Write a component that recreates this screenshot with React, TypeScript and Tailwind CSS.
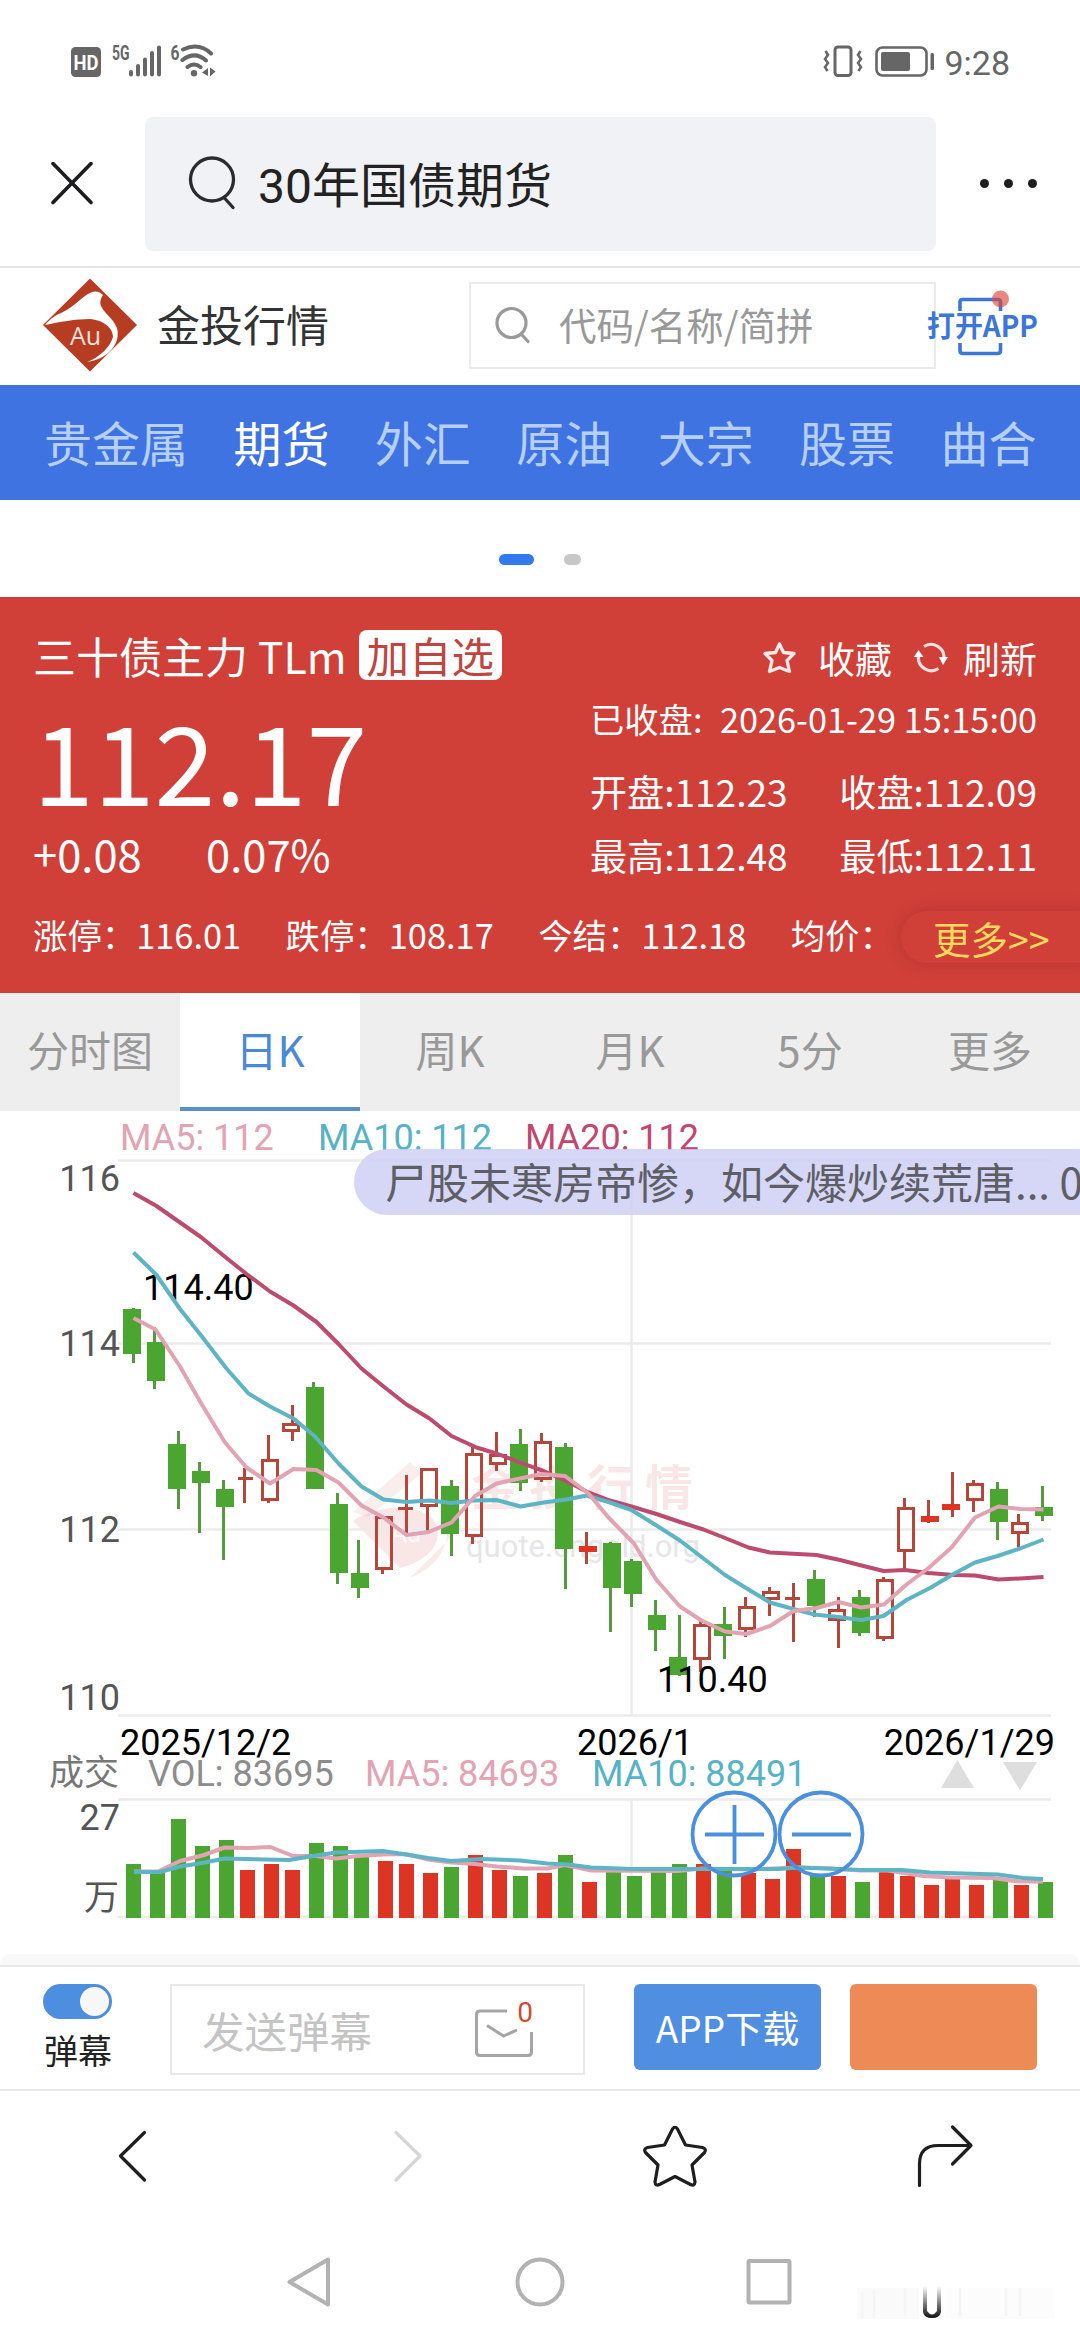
import React from 'react';

type Kind = 'g' | 'h' | 'r' | 'x';

// wick x, wick top, wick bottom, body left, body top, body bottom, kind
// g: falling, h: rising (hollow), r: rising (flat body), x: doji
const CANDLES: [number, number, number, number, number, number, Kind][] = [
    [133.5, 1308, 1363, 123, 1309, 1354, 'g'],
    [154.5, 1327, 1389, 147, 1342, 1381, 'g'],
    [178.5, 1431, 1509, 168, 1444, 1489, 'g'],
    [199.5, 1462, 1533, 192, 1471, 1483, 'g'],
    [223.5, 1480, 1560, 216, 1489, 1507, 'g'],
    [244.5, 1468, 1503, 238, 1477, 1480, 'x'],
    [268.5, 1435, 1503, 261, 1459, 1501, 'h'],
    [292.5, 1405, 1441, 282, 1423, 1432, 'h'],
    [313.5, 1382, 1489, 306, 1387, 1489, 'g'],
    [337.5, 1493, 1584, 330, 1504, 1573, 'g'],
    [358.5, 1540, 1598, 351, 1573, 1588, 'g'],
    [382.5, 1516, 1574, 375, 1516, 1570, 'h'],
    [406.5, 1475, 1533, 398, 1507, 1510, 'x'],
    [427.5, 1468, 1531, 420, 1468, 1507, 'h'],
    [451.5, 1480, 1556, 441, 1486, 1534, 'g'],
    [472.5, 1447, 1544, 465, 1453, 1537, 'h'],
    [496.5, 1432, 1471, 489, 1454, 1465, 'h'],
    [520.5, 1429, 1491, 510, 1444, 1483, 'g'],
    [541.5, 1433, 1482, 534, 1441, 1480, 'h'],
    [565.5, 1443, 1589, 555, 1447, 1549, 'g'],
    [586.5, 1532, 1564, 579, 1546, 1552, 'r'],
    [610.5, 1542, 1632, 603, 1543, 1588, 'g'],
    [631.5, 1559, 1607, 624, 1561, 1594, 'g'],
    [655.5, 1600, 1651, 648, 1615, 1630, 'g'],
    [679.5, 1615, 1676, 669, 1657, 1675, 'g'],
    [700.5, 1621, 1672, 693, 1624, 1660, 'h'],
    [724.5, 1607, 1659, 714, 1624, 1636, 'g'],
    [745.5, 1597, 1637, 738, 1606, 1630, 'h'],
    [769.5, 1587, 1616, 762, 1591, 1600, 'h'],
    [793.5, 1583, 1642, 785, 1597, 1600, 'x'],
    [814.5, 1570, 1617, 807, 1579, 1606, 'g'],
    [838.5, 1597, 1648, 828, 1609, 1621, 'h'],
    [859.5, 1590, 1636, 852, 1597, 1633, 'g'],
    [883.5, 1577, 1641, 876, 1579, 1639, 'h'],
    [904.5, 1498, 1568, 897, 1507, 1552, 'h'],
    [928.5, 1500, 1523, 921, 1516, 1522, 'r'],
    [952.5, 1472, 1517, 942, 1504, 1510, 'r'],
    [973.5, 1480, 1512, 966, 1483, 1501, 'h'],
    [997.5, 1482, 1540, 990, 1489, 1522, 'g'],
    [1018.5, 1514, 1547, 1011, 1522, 1534, 'h'],
    [1042.5, 1486, 1521, 1035, 1507, 1516, 'g'],
];

const MA20 = '133.5,1193 156.5,1206 201.5,1237.5 226.5,1258 246.5,1274 270,1291.5 293.5,1305.5 316.5,1322 338.5,1344 361.5,1368.5 383.5,1386.5 406.5,1404.5 429.5,1418.5 451.5,1436 476.5,1447.5 496.5,1453.5 520,1462.5 543.5,1471 566.5,1481 586.5,1491.5 610,1500.5 631.5,1506.5 656.5,1514 680,1522 703.5,1529.5 725,1538 748.5,1547.5 770,1552.5 816.5,1555 840,1560 861.5,1565.5 883.5,1571 905,1570 928.5,1573 953.5,1575 975,1575.5 998.5,1579.5 1020,1578.5 1043.5,1577';
const MA10 = '133.5,1252.5 156.5,1275 180,1309 201.5,1336 226.5,1368.5 248.5,1393.5 270,1406.5 293.5,1418.5 315,1436.5 338.5,1463.5 361.5,1486.5 383.5,1499.5 406.5,1502 429.5,1500.5 451.5,1503 473.5,1500.5 496.5,1500 520.5,1506.5 543.5,1502.5 566.5,1499.5 586.5,1495.5 610,1502.5 631.5,1510 656.5,1525.5 680,1540.5 703.5,1558.5 725,1575 748.5,1589.5 770,1602.5 793.5,1609 814.5,1614.5 838.5,1617 861,1620 883.5,1616 906.5,1600 930,1588 953.5,1574 975,1562.5 997.5,1556 1020,1548.5 1043.5,1539.5';
const MA5 = '133.5,1318 155.5,1329.5 180,1366.5 201.5,1404 225,1442.5 246.5,1467.5 270,1483.5 293.5,1469 316.5,1470 338.5,1482.5 361.5,1505.5 383.5,1517.5 406.5,1535 428.5,1532 451.5,1522.5 475,1496 496.5,1483.5 520,1478.5 541.5,1474 565,1476 588.5,1493.5 608.5,1517.5 634,1543.5 656.5,1580 680,1606.5 701.5,1620.5 725,1631.5 746.5,1634 770,1626 793.5,1611 816.5,1608 838.5,1602 861,1607.5 884,1604.5 906.5,1584.5 928.5,1568 951.5,1547.5 975,1517.5 998.5,1506.5 1020,1509 1043.5,1509.5';

// bar left, bar top, colour
const VOLUMES: [number, number, 'g' | 'r'][] = [
    [126, 1864, 'g'], [150, 1872, 'g'], [171, 1819, 'g'], [195, 1846, 'g'], [219, 1840, 'g'],
    [240, 1870, 'r'], [264, 1864, 'r'], [285, 1870, 'r'], [309, 1843, 'g'], [333, 1846, 'g'],
    [354, 1857, 'g'], [378, 1861, 'r'], [399, 1864, 'r'], [423, 1873, 'r'], [444, 1867, 'g'],
    [468, 1855, 'r'], [492, 1870, 'r'], [513, 1876, 'g'], [537, 1873, 'r'], [558, 1855, 'g'],
    [582, 1882, 'r'], [606, 1871, 'g'], [627, 1876, 'g'], [651, 1870, 'g'], [672, 1864, 'g'],
    [696, 1864, 'r'], [717, 1871, 'g'], [741, 1873, 'r'], [765, 1879, 'r'], [786, 1849, 'r'],
    [810, 1875, 'g'], [831, 1876, 'r'], [855, 1882, 'g'], [879, 1872, 'r'], [900, 1876, 'r'],
    [924, 1885, 'r'], [945, 1879, 'r'], [969, 1885, 'r'], [993, 1880, 'g'], [1014, 1885, 'r'],
    [1038, 1882, 'g'],
];

const VOL_MA5 = '134,1871.5 158,1871.5 180,1861 204,1855 224.5,1847.5 248,1848 270.5,1847 293,1856 315.5,1856 336,1858.5 358,1856 383,1854.5 406,1854 428,1859.5 451,1862.5 475,1864 497,1866.5 523,1868.5 547.5,1868.5 565,1865 591,1870.5 678,1871 702,1868.5 750,1869.5 799,1867.5 833,1868.5 861,1870.5 888,1870.5 923,1876 950,1877.5 992,1878 1019,1881.5 1043,1881.5';
const VOL_MA10 = '134,1872 160,1872 180,1866.5 205,1862.5 224.5,1858.5 289,1860 310,1856.5 336,1852.5 383,1851 406,1854.5 428,1858 451,1861 482,1859 520,1860.5 547.5,1863.5 568,1864.5 591,1867.5 633,1869 778,1869 799,1867.5 826,1868.5 861,1870 902,1870 930,1872.5 998,1874.5 1023,1878 1043,1879';

const GREEN = '#4aa531';
const WICK_GREEN = '#569a3e';
const RED = '#b4463a';
const FILL_RED = '#dc3523';

const Candle = ({ c }: { c: (typeof CANDLES)[number] }) => {
    const [x, hi, lo, left, top, bottom, kind] = c;
    if (kind === 'h') {
        return (
            <g stroke={RED} strokeWidth="3" fill="none">
                {hi < top && <path d={`M${x} ${hi}V${top}`} />}
                {lo > bottom && <path d={`M${x} ${bottom}V${lo}`} />}
                <rect x={left + 1.5} y={top + 1.5} width="15" height={bottom - top - 3} />
            </g>
        );
    }
    const isGreen = kind === 'g';
    return (
        <g>
            <rect x={x - 1.5} y={hi} width="3" height={lo - hi} fill={isGreen ? WICK_GREEN : RED} />
            <rect
                x={left}
                y={top}
                width={kind === 'x' ? 15 : 18}
                height={bottom - top}
                fill={isGreen ? GREEN : kind === 'r' ? FILL_RED : RED}
            />
        </g>
    );
};

const StatusBar = () => (
    <div className="flex h-[117px] items-start justify-between pr-[70px] pl-[68px] pt-[40px]">
        <svg width="152" height="42" viewBox="68 40 152 42" fill="#666">
            <rect x="71" y="47" width="30" height="30" rx="4.5" />
            <text x="86" y="69.5" fill="#fff" fontSize="21" fontWeight="700" textAnchor="middle" fontFamily="Roboto" textLength="25" lengthAdjust="spacingAndGlyphs">HD</text>
            <text x="112" y="59.5" fontSize="19.5" fontWeight="700" fontFamily="Roboto" textLength="17.5" lengthAdjust="spacingAndGlyphs">5G</text>
            <path d="M131 72V74.500M138 66V74.500M145 59.500V74.500M152 53V74.500M159 47.500V74.500" stroke="#666" strokeWidth="4" strokeLinecap="round" />
            <text x="170.5" y="59.5" fontSize="19.5" fontWeight="700" fontFamily="Roboto" textLength="9" lengthAdjust="spacingAndGlyphs">6</text>
            <path d="M183 49.500Q199 42 211 53.500M182.500 60Q195 50.500 206 60.500M187.500 67Q194 62 200.500 67" fill="none" stroke="#666" strokeWidth="4" strokeLinecap="round" />
            <circle cx="194" cy="73.200" r="3.200" />
            <path d="M208 68V76L202 72.500ZM210 67.500V76.500L215.500 71.500Z" />
        </svg>
        <div className="flex items-center gap-[9px] pt-px">
            <svg width="112" height="40" viewBox="822 42 112 40" fill="none" stroke="#666">
                <path d="M824.500 51l2.500 4-3 4 3 4-3 4 2.500 4M859.500 51l-2.500 4 3 4-3 4 3 4-2.500 4" strokeWidth="2.500" />
                <rect x="834" y="47" width="16" height="28.500" rx="3" strokeWidth="3" />
                <rect x="875.500" y="47.500" width="50" height="28" rx="6" strokeWidth="2.600" />
                <rect x="880" y="52" width="29" height="19" rx="2" fill="#666" stroke="none" />
                <rect x="929.500" y="53" width="3.500" height="17" rx="1.500" fill="#666" stroke="none" />
            </svg>
            <span className="pt-[2px] font-[Roboto] text-[34px] leading-[40px] text-[#666]">9:28</span>
        </div>
    </div>
);

const BrowserBar = () => (
    <div className="flex h-[151px] items-start border-b-2 border-[#e4e4e4]">
        <div className="flex h-[134px] w-[145px] items-center pl-[50px]">
            <svg width="44" height="44" viewBox="0 0 44 44" stroke="#1d1d1f" strokeWidth="3.600" strokeLinecap="round">
                <path d="M3 1.500 41 40.500M41 1.500 3 40.500" />
            </svg>
        </div>
        <div className="flex h-[134px] w-[791px] items-center rounded-lg bg-[#f1f2f5] pl-[43px]">
            <svg width="50" height="56" viewBox="0 0 50 56" fill="none" stroke="#2b2b2e" strokeWidth="3.300" strokeLinecap="round">
                <circle cx="24" cy="23.500" r="21.500" />
                <path d="M36 41.500 45 51.500" />
            </svg>
            <span className="ml-[20px] pt-[6px] font-[Roboto,'Noto_Sans_CJK_SC',sans-serif] text-[48px] leading-[60px] text-[#222]">30年国债期货</span>
        </div>
        <div className="flex h-[132px] flex-1 items-center justify-center gap-[15px]">
            <i className="size-[9px] rounded-full bg-[#1d1d1f]" />
            <i className="size-[9px] rounded-full bg-[#1d1d1f]" />
            <i className="size-[9px] rounded-full bg-[#1d1d1f]" />
        </div>
    </div>
);

const SiteHeader = () => (
    <div className="flex h-[117px] items-center pb-[3px]">
        <svg className="ml-[42px]" width="96" height="96" viewBox="0 0 96 96">
            <path d="M48 1.500 95 48 48 94.500 1 48Z" fill="#b63d21" />
            <path d="M3 48C9 41 14 38 21 35C31 30 39 21 46 17C51 14 56 13 61 18C58 22 58 26 59 29C62 36 71 41 75 51C79 66 67 82 45 85C58 80 68 70 71 60C71 50 60 43 48 42C34 42 17 45 3 48Z" fill="#fff" />
            <text x="43.500" y="68" fontSize="25" fill="#f6e0da" textAnchor="middle" fontFamily="Open Sans">Au</text>
        </svg>
        <span className="ml-[19px] w-[312px] pb-[4px] text-[43px] leading-[60px] text-[#333]">金投行情</span>
        <div className="flex h-[87px] w-[467px] items-center border-2 border-[#ebebeb] pl-[24px]">
            <svg width="36" height="38" viewBox="0 0 36 38" fill="none" stroke="#999" strokeWidth="3.200" strokeLinecap="round">
                <circle cx="16.500" cy="17" r="14.500" />
                <path d="M27 29 33 35.500" />
            </svg>
            <span className="ml-[28px] pb-px text-[37.5px] text-[#999]">代码/名称/简拼</span>
        </div>
        <svg className="relative -left-[11px] overflow-visible" width="116" height="70" viewBox="924 290 116 70">
            <path d="M959 311V302Q959 299.500 961.500 299.500H997Q999.500 299.500 999.500 302V311M959 343V350.500Q959 353.500 962 353.500H996.500Q999.500 353.500 999.500 350.500V343" fill="none" stroke="#3c77d8" strokeWidth="3.600" />
            <circle cx="999.500" cy="299" r="8.500" fill="#dd4b3e" fillOpacity=".65" />
            <text x="926" y="337" fontSize="29" fontWeight="700" fill="#3c77d8" textLength="111" lengthAdjust="spacingAndGlyphs">打开APP</text>
        </svg>
    </div>
);

const CATEGORIES = ['贵金属', '期货', '外汇', '原油', '大宗', '股票', '曲合'];

const CategoryNav = () => (
    <div className="flex h-[115px] items-center gap-[45.4px] overflow-hidden bg-[#4073e2] pb-[3px] pl-[44px] text-[48px] whitespace-nowrap">
        {CATEGORIES.map((name) => (
            <span key={name} className={name === '期货' ? 'text-white' : 'text-[#b5d0ff]'}>{name}</span>
        ))}
    </div>
);

const QuotePanel = () => (
    <div className="h-[396px] overflow-hidden bg-[#d04039] text-white">
        <div className="flex h-[308px]">
            <div className="w-[590px] pl-[33px]">
                <div className="flex items-center pt-[33px] text-[43px] leading-[50px]">
                    <span className="whitespace-pre">三十债主力 TLm</span>
                    <span className="ml-[12px] rounded-lg bg-white px-[8px] text-[42.5px] leading-[50px] text-[#c0453f]">加自选</span>
                </div>
                <div className="mt-[24px] text-[109.5px] leading-[110px]">112.17</div>
                <div className="mt-[13px] flex text-[43.5px] leading-[54px]">
                    <span className="w-[173px]">+0.08</span>
                    <span>0.07%</span>
                </div>
            </div>
            <div className="w-[447px]">
                <div className="flex items-center justify-end pt-[39px] text-[37px] leading-[44px]">
                    <svg className="mr-[21px]" width="35" height="34" viewBox="0 0 35 34" fill="none" stroke="#fdeae8" strokeWidth="3.300" strokeLinejoin="round">
                        <path d="M17.500 3 21.500 11.500 32 12.500 25 19.500 27.500 30.500 17.500 26.500 7.500 30.500 10 19.500 3 12.500 13.500 11.500Z" />
                    </svg>
                    <span>收藏</span>
                    <svg className="mr-[15px] ml-[22px]" width="34" height="32" viewBox="0 0 34 32" fill="none" stroke="#f9dedb" strokeWidth="3.200">
                        <path d="M10 4.500A13 13 0 0 1 30 16.500M24.500 26.500A13 13 0 0 1 4.500 14" />
                        <path d="M25 15h9l-5 8ZM0 15h9.500l-5-7Z" fill="#fff" stroke="none" />
                    </svg>
                    <span>刷新</span>
                </div>
                <div className="mt-[18px] flex justify-between text-[34.3px] leading-[40px]">
                    <span>已收盘:</span>
                    <span>2026-01-29 15:15:00</span>
                </div>
                <div className="mt-[31px] grid grid-cols-[auto_auto] justify-between gap-y-[20px] text-[37.1px] leading-[44px]">
                    <span>开盘:112.23</span>
                    <span>收盘:112.09</span>
                    <span>最高:112.48</span>
                    <span>最低:112.11</span>
                </div>
            </div>
        </div>
        <div className="relative flex h-[60px] items-center gap-[44.4px] pl-[33px] text-[34.4px] whitespace-nowrap">
            <span>涨停：116.01</span>
            <span>跌停：108.17</span>
            <span>今结：112.18</span>
            <span>均价：</span>
            <div className="absolute top-[6px] left-[901px] flex h-[52px] w-[190px] items-center rounded-l-[26px] bg-[#d04039] pt-[3px] pl-[32px] text-[37.5px] text-[#ffd95c] shadow-[0_0_16px_rgba(120,20,10,0.28)]">
                更多&gt;&gt;
            </div>
        </div>
    </div>
);

const PERIODS = ['分时图', '日K', '周K', '月K', '5分', '更多'];

const PeriodTabs = () => (
    <div className="grid h-[118px] grid-cols-6 bg-[#eeeeee] text-[42px] text-[#999]">
        {PERIODS.map((p) => (
            <div
                key={p}
                className={p === '日K'
                    ? 'flex items-center justify-center border-b-4 border-[#5b8fc9] bg-white pb-[4px] text-[#4a8ad4]'
                    : 'flex items-center justify-center border-b-4 border-transparent pb-[4px]'}
            >
                {p}
            </div>
        ))}
    </div>
);

const KLineChart = () => (
    <div className="relative h-[843px] overflow-hidden">
        <svg className="block" width="1080" height="843" viewBox="0 1111 1080 843" fontFamily="Roboto, 'Noto Sans CJK SC', sans-serif" fontSize="36">
            {/* watermark */}
            <g fill="#c8463c">
                <path d="M353 1512 410 1462 422 1473 368 1517Z" fillOpacity=".09" />
                <path d="M353 1521C380 1503 425 1503 436 1524C444 1545 425 1562 400 1568Z" fillOpacity=".13" />
                <path d="M410 1578C440 1565 452 1545 446 1512L462 1526Z" fillOpacity=".11" />
                <text x="471" y="1505" fontSize="48" fontWeight="700" letterSpacing="10" fillOpacity=".13">金投行情</text>
                <text x="390" y="1542" fontSize="26" fill="#fff" fillOpacity=".8">Au</text>
            </g>
            <text x="466" y="1557" fontSize="31" fill="#e6e6e8" textLength="234">quote.cngold.org</text>

            <path d="M118 1160.500H1051M118 1343.500H1051M118 1529.500H1051M118 1715.500H1051M631.500 1160V1716M118 1799.500H1051M631.500 1799V1917M118 1917H1051" stroke="#ebebeb" strokeWidth="2.500" fill="none" />

            {CANDLES.map((c) => <Candle key={c[0]} c={c} />)}
            <text x="143" y="1300">114.40</text>
            <g fill="none" strokeWidth="4" strokeLinejoin="round">
                <polyline points={MA20} stroke="#bd4b70" />
                <polyline points={MA10} stroke="#5db4c4" />
                <polyline points={MA5} stroke="#e2a3b3" />
            </g>
            <text x="657" y="1692">110.40</text>

            <text x="120" y="1150" fill="#e4a2b3">MA5: 112</text>
            <text x="318" y="1150" fill="#55b3c5">MA10: 112</text>
            <text x="525" y="1150" fill="#c4456e">MA20: 112</text>

            <g fill="#555" textAnchor="end">
                <text x="120" y="1191">116</text>
                <text x="120" y="1356">114</text>
                <text x="120" y="1542">112</text>
                <text x="120" y="1710">110</text>
                <text x="120" y="1830">27</text>
                <text x="119" y="1910" fontSize="35">万</text>
                <text x="119" y="1785" fontSize="35" fill="#777">成交</text>
            </g>

            <text x="120" y="1754.500">2025/12/2</text>
            <text x="635" y="1754.500" textAnchor="middle">2026/1</text>
            <text x="1055" y="1754.500" textAnchor="end">2026/1/29</text>

            <text x="148" y="1786" fill="#8c8c8c">VOL: 83695</text>
            <text x="365" y="1786" fill="#e4a2b3">MA5: 84693</text>
            <text x="592" y="1786" fill="#55b3c5">MA10: 88491</text>
            <path d="M941 1788 957.500 1760 974 1788ZM1003 1762H1037L1020 1790.500Z" fill="#dedede" />

            {VOLUMES.map(([x, y, color]) => (
                <rect key={x} x={x} y={y} width="15" height={1918 - y} fill={color === 'g' ? GREEN : FILL_RED} />
            ))}
            <g fill="none" strokeWidth="4" strokeLinejoin="round">
                <polyline points={VOL_MA5} stroke="#e2a3b3" />
                <polyline points={VOL_MA10} stroke="#5db4c4" />
            </g>

            <g fill="none" stroke="#4a90dc" strokeWidth="3.800">
                <circle cx="734" cy="1834" r="41.500" />
                <circle cx="821" cy="1834" r="41.500" />
                <path d="M705 1834.500H764M734.500 1805V1864M792 1834.500H851" />
            </g>
        </svg>
        <div className="absolute top-[38px] left-[354px] flex h-[66px] w-[760px] items-center rounded-l-full bg-[#cfcff6]/85 pb-[4px] pl-[31px] text-[42px] whitespace-nowrap text-[#5e5e66]">
            尸股未寒房帝惨，如今爆炒续荒唐... 0
        </div>
    </div>
);

const DanmakuBar = () => (
    <>
        <div className="h-[11px] rounded-t-xl bg-[#f8f8f8]" />
        <div className="flex h-[126px] items-start border-t-2 border-b-2 border-[#e8e8e8] pt-[17px]">
            <div className="flex w-[170px] flex-col pl-[43px]">
                <div className="flex h-[35px] w-[69px] items-center justify-end rounded-full bg-[#4c8ee0] pr-[3px]">
                    <i className="size-[29px] rounded-full bg-[#f7f7f7]" />
                </div>
                <span className="mt-[9px] pl-px text-[34px] leading-[44px] text-[#222]">弹幕</span>
            </div>
            <div className="flex h-[91px] w-[415px] items-center border-2 border-[#e8e8e8] pl-[30px]">
                <span className="w-[270px] text-[42.5px] text-[#c4c4c4]">发送弹幕</span>
                <svg width="62" height="66" viewBox="472 1996 62 66" fill="none" stroke="#a5a5a5" strokeWidth="3">
                    <path d="M507 2010H480Q476.500 2010 476.500 2013.500V2051Q476.500 2054.500 480 2054.500H528Q531.500 2054.500 531.500 2051V2031" />
                    <path d="M487 2024.500 503.500 2035 517 2029" />
                    <text x="525" y="2021" fontSize="28" textAnchor="middle" fill="#c9502f" stroke="none" fontFamily="Roboto">0</text>
                </svg>
            </div>
            <button className="ml-[49px] h-[86px] w-[187px] rounded-md bg-[#4f8ee0] pt-[2px] text-[37px] text-white">APP下载</button>
            <div className="ml-[29px] h-[86px] w-[187px] rounded-md bg-[#ee8a55]" />
        </div>
    </>
);

const BrowserNav = () => (
    <div className="flex h-[133px] items-center">
        <svg width="1080" height="133" viewBox="0 2091 1080 133" fill="none" stroke="#1e1e20" strokeWidth="3.200" strokeLinecap="round" strokeLinejoin="round">
            <path d="M144.500 2132.500 120.500 2156 144.500 2180" />
            <path d="M396 2132.500 420 2156 396 2180" stroke="#d6d6d6" />
            <path d="M672.500 2129Q675 2125.500 677.500 2129L685.500 2145 702.500 2147.500Q707 2149 704.500 2152.500L692 2165 695 2182Q694.500 2186.500 690.500 2184.500L675 2176.500 659.500 2184.500Q655.500 2186.500 655 2182L658 2165 645.500 2152.500Q643 2149 647.500 2147.500L664.500 2145Z" />
            <path d="M919.500 2185.500V2164Q919.500 2145.500 938 2145.500H971M952.500 2127 971 2145.500 952.500 2164" />
        </svg>
    </div>
);

const SystemNav = () => (
    <div className="flex h-[116px]">
        <svg width="1080" height="116" viewBox="0 2224 1080 116" fill="none" stroke="#b2b2b2" strokeWidth="4" strokeLinejoin="round">
            <defs>
                <linearGradient id="fade" x1="0" y1="0" x2="0" y2="1">
                    <stop offset="0" stopColor="#111" stopOpacity="0" />
                    <stop offset="1" stopColor="#111" />
                </linearGradient>
            </defs>
            <path d="M328 2259.500V2304.500L289.500 2282Z" />
            <circle cx="540" cy="2282" r="22.500" />
            <rect x="748.500" y="2261" width="41" height="41.500" rx="1" />
            <g stroke="none">
                <rect x="857" y="2288" width="62" height="31" fill="#fafafa" />
                <rect x="946" y="2288" width="108" height="31" fill="#fcfcfc" />
                <path d="M862 2292v26M874 2290v28M905 2288v28M960 2288v28M1006 2288v28M1020 2288v28" stroke="#f5f5f5" strokeWidth="3" />
                <path d="M923 2286H927V2311Q932 2318 937 2311V2286H941V2312Q940 2318 932 2318 924 2318 923 2312Z" fill="url(#fade)" />
            </g>
        </svg>
    </div>
);

const App: React.FC = () => (
    <div className="h-[2340px] w-[1080px] overflow-hidden bg-white font-['Noto_Sans_CJK_SC',sans-serif]">
        <StatusBar />
        <BrowserBar />
        <SiteHeader />
        <CategoryNav />
        <div className="flex h-[97px] items-center justify-center gap-[30px] pt-[22px]">
            <i className="h-[11px] w-[35px] rounded-full bg-[#3478f0]" />
            <i className="h-[11px] w-[17px] rounded-full bg-[#c8c8c8]" />
        </div>
        <QuotePanel />
        <PeriodTabs />
        <KLineChart />
        <DanmakuBar />
        <BrowserNav />
        <SystemNav />
    </div>
);

export default App;
